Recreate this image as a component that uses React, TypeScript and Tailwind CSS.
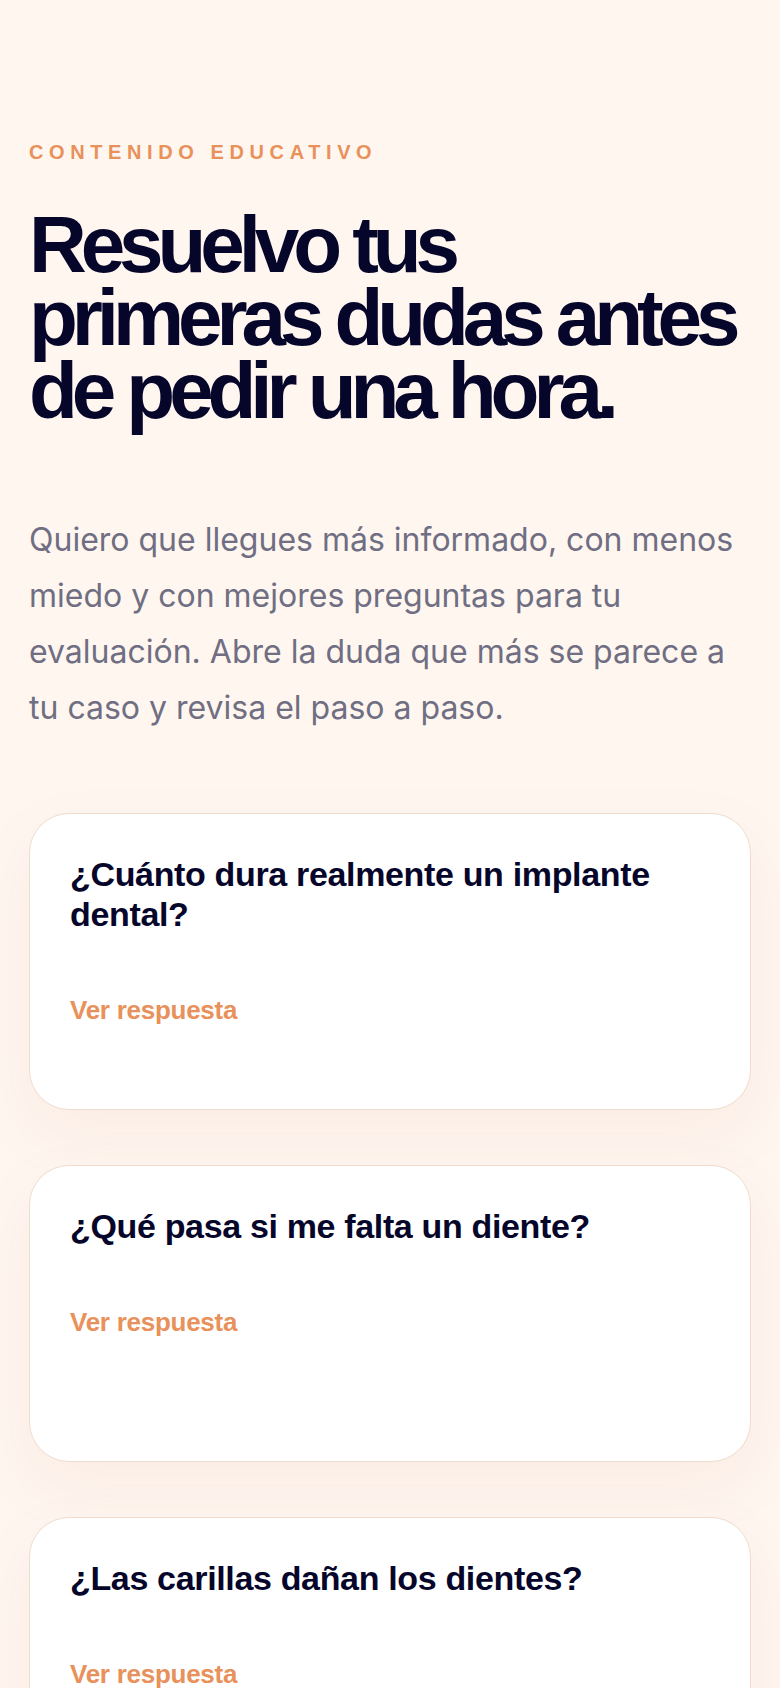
const faqs = [
  { id: 'implante', question: '¿Cuánto dura realmente un implante dental?' },
  { id: 'diente', question: '¿Qué pasa si me falta un diente?' },
  { id: 'carillas', question: '¿Las carillas dañan los dientes?' },
];

function FaqCard({ question }: { question: string }) {
  return (
    <div className="min-h-[297px] rounded-[40px] border-[1.5px] border-[#efdccd] bg-white px-10 pt-10 pb-10 shadow-[0_24px_60px_rgba(190,130,90,0.08)]">
      <h3 className="font-['Liberation_Sans',Arial,sans-serif] text-[34px] font-bold leading-[40px] tracking-[-0.01em] text-[#06062b]">
        {question}
      </h3>
      <button className="mt-[62px] font-['Liberation_Sans',Arial,sans-serif] text-[26px] font-bold leading-[28px] tracking-[-0.01em] text-[#e8915b]">
        Ver respuesta
      </button>
    </div>
  );
}

export default function App() {
  return (
    <div className="min-h-screen bg-[#fff6f0]">
      <section className="px-[29px] pt-[140px] pb-16">
        <p className="font-['Liberation_Sans',Arial,sans-serif] text-[20px] font-bold uppercase leading-[24px] tracking-[0.28em] text-[#e8915b]">
          Contenido educativo
        </p>
        <h1 className="mt-[44px] font-['Liberation_Sans',Arial,sans-serif] text-[80px] font-bold leading-[73px] tracking-[-0.076em] text-[#06062b]">
          Resuelvo tus primeras dudas antes de pedir una hora.
        </h1>
        <p className="mt-[85px] font-['Inter','Noto_Sans',sans-serif] text-[32px] leading-[56px] text-[#6f6e82]">
          Quiero que llegues más informado, con menos miedo y con mejores preguntas para tu evaluación. Abre la
          duda que más se parece a tu caso y revisa el paso a paso.
        </p>

        <div className="mt-[77px] flex flex-col gap-[55px]">
          {faqs.map((faq) => (
            <FaqCard key={faq.id} question={faq.question} />
          ))}
        </div>
      </section>
    </div>
  );
}
